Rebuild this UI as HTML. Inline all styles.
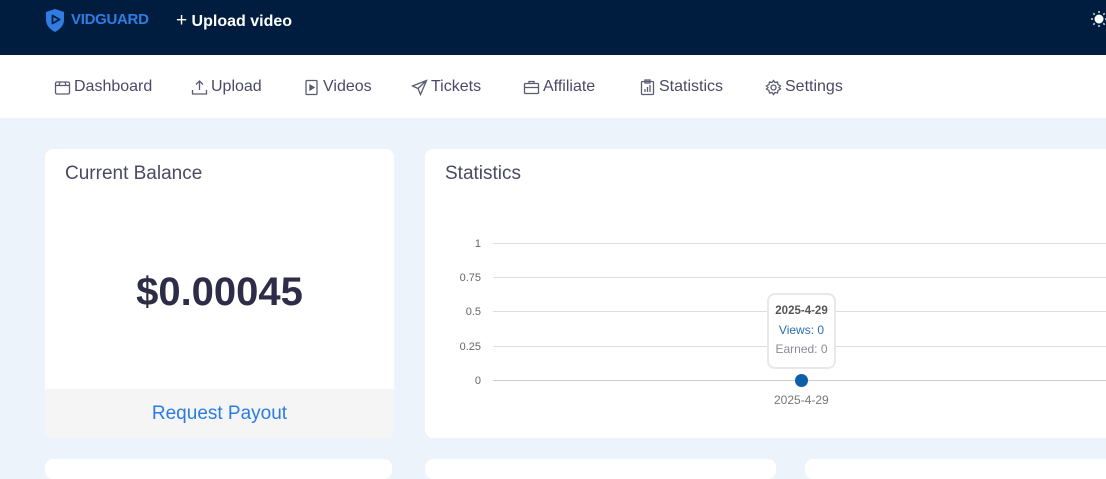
<!DOCTYPE html>
<html><head><style>
*{margin:0;padding:0;box-sizing:border-box}
body{width:1106px;height:462px;overflow:hidden;background:#ecf3fa;font-family:"Liberation Sans",sans-serif;position:relative}
.hdr{position:absolute;left:0;top:0;width:1106px;height:55px;background:#001d40}
.nav{position:absolute;left:0;top:55px;width:1106px;height:63px;background:#fff}
.ni{position:absolute;top:77px;font-size:16px;color:#4a4a68;display:flex;align-items:center;gap:3px}
.ni svg{width:17px;height:17px;stroke:#5a5a70;fill:none;stroke-width:1.3}
.card{position:absolute;background:#fff;border-radius:8px;overflow:hidden}
.yl{position:absolute;font-size:11px;color:#666;width:40px;text-align:right;left:441px}
.gl{position:absolute;left:493px;width:613px;height:1px;background:#ddd}
</style></head><body>
<div class="hdr">
<svg style="position:absolute;left:45px;top:8px" width="20" height="24" viewBox="0 0 20 24"><path d="M10 1L19 4V12C19 18 14 22 10 24C6 22 1 18 1 12V4Z" fill="#2f7de1"/><path d="M7.5 7.5V15.5L14.5 11.5Z" fill="none" stroke="#001d40" stroke-width="1.8" stroke-linejoin="round"/></svg>
<div style="position:absolute;left:71px;top:11px;font-size:15px;font-weight:bold;color:#2f7de1;letter-spacing:-0.3px">VIDGUARD</div>
<div style="position:absolute;left:176px;top:10px;font-size:16px;font-weight:bold;color:#fff"><span style="font-weight:normal;font-size:19px">+</span> Upload video</div>
<svg style="position:absolute;left:1090px;top:10px" width="18" height="18" viewBox="0 0 18 18"><circle cx="9" cy="9" r="4.5" fill="#fff"/><path d="M9 1V3M9 15V17M1 9H3M15 9H17M3.3 3.3L4.7 4.7M13.3 13.3L14.7 14.7M3.3 14.7L4.7 13.3M13.3 4.7L14.7 3.3" stroke="#cde" stroke-width="1.5"/></svg>
</div>
<div class="nav"></div>
<div class="ni" style="left:54px;top:78px"><svg viewBox="0 0 17 17"><rect x="1.5" y="3" width="14" height="12" rx="1.5"/><path d="M1.5 6.5H15.5M6 3L5 6.5M11 3L12 6.5"/></svg>Dashboard</div>
<div class="ni" style="left:191px;top:78px"><svg viewBox="0 0 17 17"><path d="M8.5 11V2M5 5.5L8.5 2L12 5.5M1.5 11V15H15.5V11"/></svg>Upload</div>
<div class="ni" style="left:303px;top:78px"><svg viewBox="0 0 17 17"><rect x="3" y="1.5" width="11" height="14" rx="1"/><path d="M7 6V11L11 8.5Z" fill="#5a5a70"/></svg>Videos</div>
<div class="ni" style="left:411px;top:78px"><svg viewBox="0 0 17 17"><path d="M15.5 1.5L1.5 7L7 9.5L9.5 15.5ZM7 9.5L15.5 1.5"/></svg>Tickets</div>
<div class="ni" style="left:523px;top:78px"><svg viewBox="0 0 17 17"><rect x="1.5" y="4.5" width="14" height="10" rx="1"/><path d="M6 4.5V2.5H11V4.5M1.5 8.5H15.5"/></svg>Affiliate</div>
<div class="ni" style="left:639px;top:78px"><svg viewBox="0 0 17 17"><rect x="2.5" y="2.5" width="12" height="13" rx="1"/><rect x="6" y="1" width="5" height="3"/><path d="M6 13V10M8.5 13V8M11 13V6"/></svg>Statistics</div>
<div class="ni" style="left:765px;top:78px"><svg viewBox="0 0 17 17"><circle cx="8.5" cy="8.5" r="2.5"/><path d="M8.5 1.5L10 3.5L12.5 3L13 5.5L15.5 7L14 8.5L15.5 10L13 11.5L12.5 14L10 13.5L8.5 15.5L7 13.5L4.5 14L4 11.5L1.5 10L3 8.5L1.5 7L4 5.5L4.5 3L7 3.5Z"/></svg>Settings</div>

<div class="card" style="left:45px;top:149px;width:349px;height:289px">
<div style="position:absolute;left:20px;top:14px;font-size:19px;color:#4a4a60">Current Balance</div>
<div style="position:absolute;left:0;width:349px;top:121px;text-align:center;font-size:40px;font-weight:bold;color:#2d2d48">$0.00045</div>
<div style="position:absolute;left:0;top:240px;width:349px;height:49px;background:#f5f5f6;text-align:center;line-height:49px;font-size:19px;color:#2a7de0">Request Payout</div>
</div>
<div class="card" style="left:425px;top:149px;width:700px;height:289px">
<div style="position:absolute;left:20px;top:14px;font-size:19px;color:#4a4a60">Statistics</div>
</div>
<div class="gl" style="top:243px"></div><div class="gl" style="top:277px"></div><div class="gl" style="top:311px"></div><div class="gl" style="top:346px"></div><div class="gl" style="top:380px;background:#ccc"></div>
<div class="yl" style="top:238px">1</div><div class="yl" style="top:272px">0.75</div><div class="yl" style="top:306px">0.5</div><div class="yl" style="top:341px">0.25</div><div class="yl" style="top:375px">0</div>
<div style="position:absolute;left:795px;top:374px;width:13px;height:13px;border-radius:50%;background:#0d5fa8"></div>
<div style="position:absolute;left:774px;top:393px;font-size:12px;color:#777">2025-4-29</div>
<div style="position:absolute;left:767px;top:293px;width:69px;height:76px;background:#fff;border:2px solid #e8e8e8;border-radius:8px;text-align:center;font-size:12px">
<div style="margin-top:10px;font-weight:bold;color:#555;font-size:11.5px">2025-4-29</div>
<div style="margin-top:6px;color:#2a6db5">Views: 0</div>
<div style="margin-top:5px;color:#8a8a9a">Earned: 0</div>
</div>
<div class="card" style="left:45px;top:459px;width:347px;height:20px"></div>
<div class="card" style="left:425px;top:459px;width:351px;height:20px"></div>
<div class="card" style="left:805px;top:459px;width:320px;height:20px"></div>
</body></html>
